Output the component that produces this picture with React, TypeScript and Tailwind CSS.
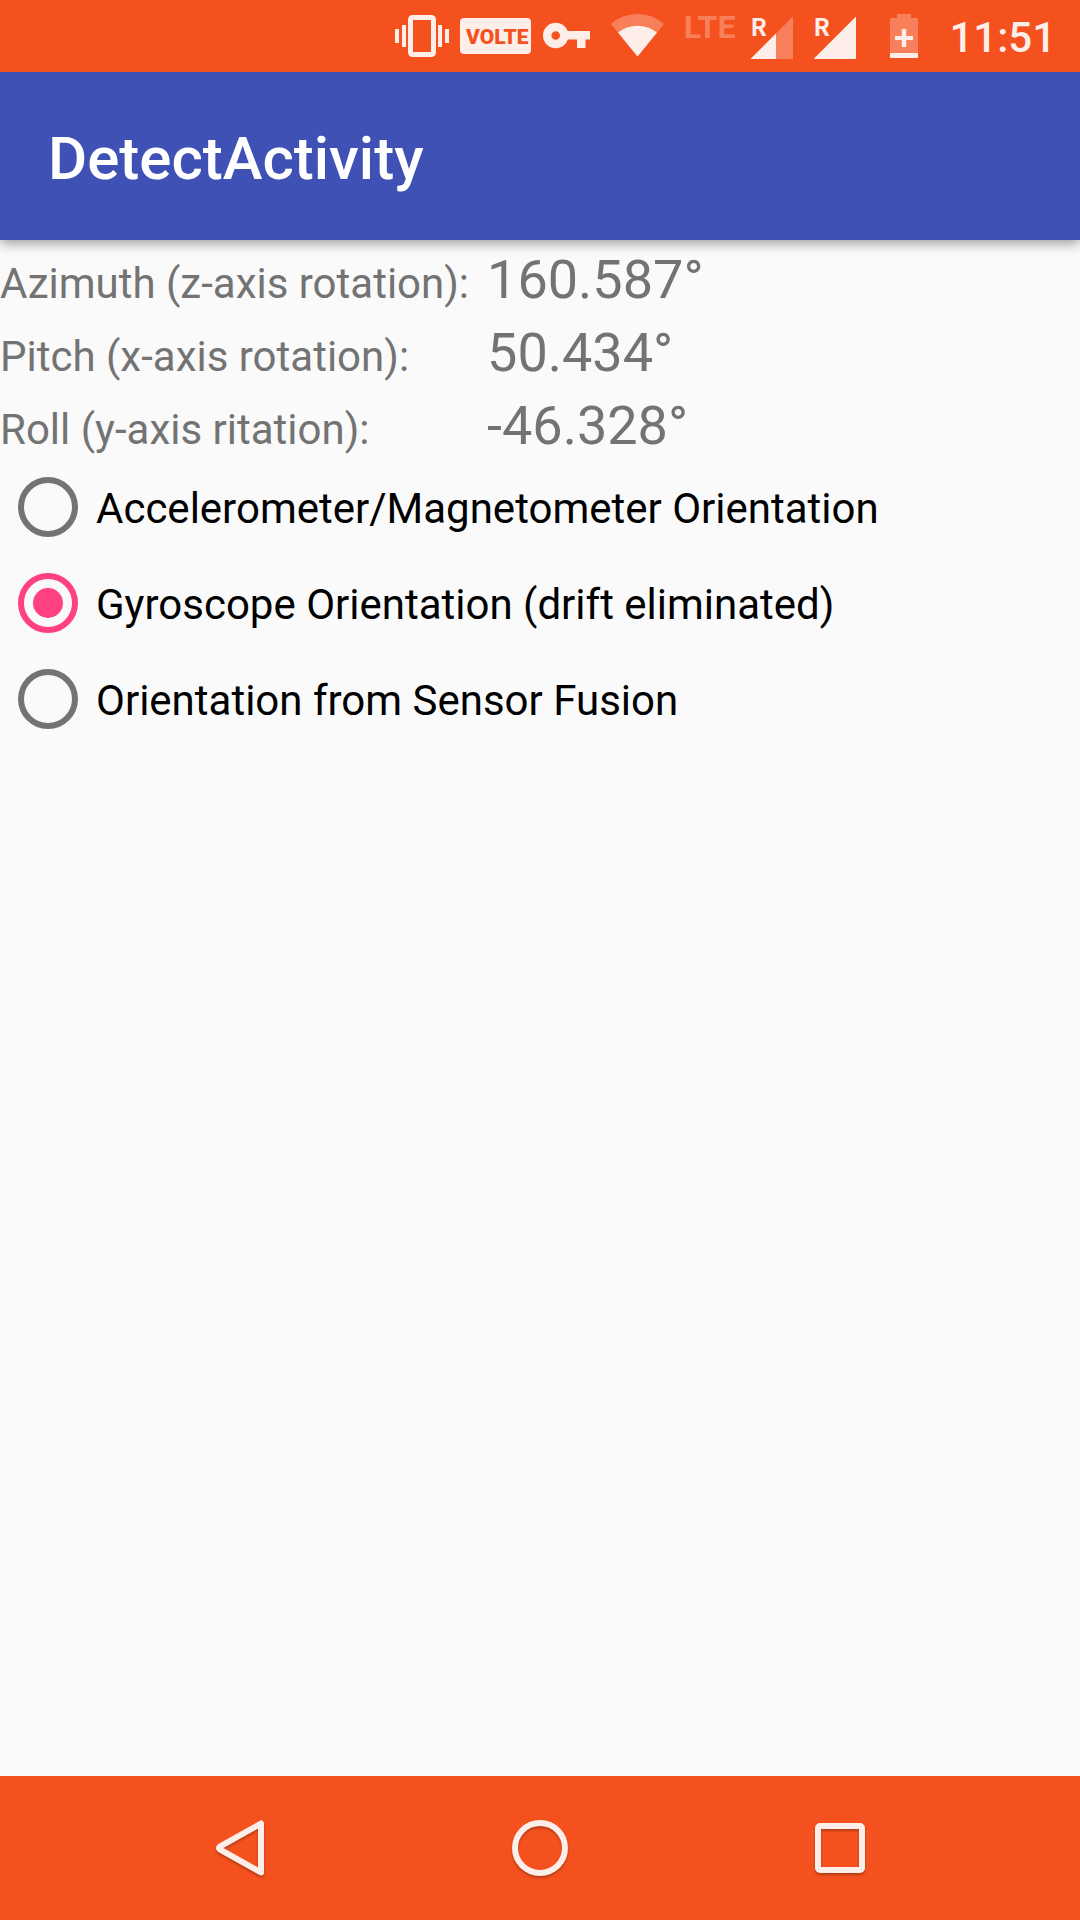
import { useState } from "react";

const readings = [
  { label: "Azimuth (z-axis rotation):", value: "160.587°" },
  { label: "Pitch (x-axis rotation):", value: "50.434°" },
  { label: "Roll (y-axis ritation):", value: "-46.328°" },
];

const modes = [
  "Accelerometer/Magnetometer Orientation",
  "Gyroscope Orientation (drift eliminated)",
  "Orientation from Sensor Fusion",
];

function VibrateIcon() {
  return (
    <svg width="54" height="48" viewBox="0 0 54 48" fill="currentColor" aria-label="Vibrate">
      <rect x="0" y="17" width="4" height="14" />
      <rect x="7" y="13" width="4" height="22" />
      <rect x="15.5" y="5.5" width="23" height="37" rx="2" fill="none" stroke="currentColor" strokeWidth="5" />
      <rect x="43" y="13" width="4" height="22" />
      <rect x="50" y="17" width="4" height="14" />
    </svg>
  );
}

function KeyIcon() {
  return (
    <svg width="47" height="48" viewBox="0 0 47 48" aria-label="VPN">
      <circle cx="12.7" cy="23.5" r="8.5" fill="none" stroke="currentColor" strokeWidth="8.4" />
      <path d="M23 19H47V27.5H42.5V36H34V27.5H23Z" fill="currentColor" />
    </svg>
  );
}

function WifiIcon() {
  return (
    <svg width="53" height="48" viewBox="0 0 53 48" fill="currentColor" aria-label="Wi-Fi">
      <path d="M26.5 44.5L0 12A40 40 0 0 1 53 12Z" opacity="0.3" />
      <path d="M26.5 44.5L7 20.4A32 32 0 0 1 46 20.4Z" />
    </svg>
  );
}

function SignalIcon({ full }: { full?: boolean }) {
  return (
    <div className="relative h-12 w-[43px]">
      <svg width="43" height="48" viewBox="0 0 43 48" fill="currentColor" aria-label="Signal">
        <path d="M0.5 47L43 4.5V47Z" opacity={full ? 1 : 0.3} />
        {!full && <path d="M0.5 47L26 21.5V47Z" />}
      </svg>
      <span className="absolute top-0 left-0 font-['Noto_Sans_CJK_SC',sans-serif] text-[24px] leading-7 font-bold">
        R
      </span>
    </div>
  );
}

function BatteryIcon() {
  return (
    <svg width="28" height="48" viewBox="0 0 28 48" fill="currentColor" aria-label="Battery charging">
      <path d="M7 2H21V6H28V41H0V6H7Z" opacity="0.3" />
      <rect x="0" y="41" width="28" height="5" />
      <path d="M11.8 17H16.2V24H23V28H16.2V35H11.8V28H5V24H11.8Z" />
    </svg>
  );
}

function StatusBar() {
  return (
    <div className="relative z-10 flex h-[72px] items-center justify-end bg-[#f4511e] pr-6 text-[#feeee9]">
      <VibrateIcon />
      <span className="ml-[11px] flex h-9 w-[71px] items-center justify-center rounded bg-[#feeee9] pt-0.5 pl-1 font-['Roboto',sans-serif] text-[21px] leading-8 font-black text-[#f4511e]">
        VOLTE
      </span>
      <span className="ml-3">
        <KeyIcon />
      </span>
      <span className="ml-[21px]">
        <WifiIcon />
      </span>
      <span className="mr-[15px] mb-[18px] ml-5 font-['Roboto',sans-serif] text-[32px] leading-8 font-bold opacity-30">
        LTE
      </span>
      <SignalIcon />
      <span className="ml-5">
        <SignalIcon full />
      </span>
      <span className="ml-[34px]">
        <BatteryIcon />
      </span>
      <time className="ml-[31px] pt-1 text-[42px] leading-[48px] font-medium">11:51</time>
    </div>
  );
}

function NavBar() {
  const button = "flex items-center justify-center";
  const icon = "drop-shadow-[0_2px_1px_rgba(0,0,0,0.25)]";
  return (
    <nav className="grid h-36 grid-cols-3 bg-[#f4511e] px-[8.333%] text-[#feeee9]">
      <button type="button" aria-label="Back" className={button}>
        <svg width="60" height="60" viewBox="0 0 60 60" className={icon} fill="none" stroke="currentColor" strokeWidth="6" strokeLinejoin="round">
          <path d="M51 5.5V54.5L9.8 31.3Q8 30 9.8 28.7Z" />
        </svg>
      </button>
      <button type="button" aria-label="Home" className={button}>
        <svg width="60" height="60" viewBox="0 0 60 60" className={icon} fill="none" stroke="currentColor" strokeWidth="6">
          <circle cx="30" cy="30" r="25" />
        </svg>
      </button>
      <button type="button" aria-label="Recent apps" className={button}>
        <svg width="60" height="60" viewBox="0 0 60 60" className={icon} fill="none" stroke="currentColor" strokeWidth="6">
          <rect x="8" y="8" width="44" height="44" rx="2" />
        </svg>
      </button>
    </nav>
  );
}

export default function App() {
  const [mode, setMode] = useState(modes[1]);

  return (
    <div className="flex min-h-screen flex-col bg-[#fafafa] font-['Roboto',sans-serif]">
      <StatusBar />
      <header className="flex h-[168px] items-center bg-[#3f51b5] px-12 pt-1.5 shadow-[0_3px_12px_rgba(0,0,0,0.4)]">
        <h1 className="text-[60px] leading-[72px] font-medium text-white">DetectActivity</h1>
      </header>
      <main className="flex-1">
        <table className="text-[#737373]">
          <tbody>
            {readings.map(({ label, value }) => (
              <tr key={label} className="h-[73px] align-baseline">
                <th scope="row" className="pr-[18px] text-left text-[42px] leading-[50px] font-normal">
                  {label}
                </th>
                <td className="pt-2 text-[54px] leading-[63px]">{value}</td>
              </tr>
            ))}
          </tbody>
        </table>
        <div role="radiogroup" aria-label="Orientation source">
          {modes.map((name) => (
            <label key={name} className="flex h-24 items-center gap-[18px] pl-[18px] text-[42px] leading-[50px] text-black">
              <input
                type="radio"
                name="mode"
                checked={mode === name}
                onChange={() => setMode(name)}
                className="grid size-[60px] shrink-0 appearance-none place-items-center rounded-full border-6 border-[#737373] before:size-[30px] before:rounded-full checked:border-[#ff4081] checked:before:bg-[#ff4081]"
              />
              <span className="pt-1">{name}</span>
            </label>
          ))}
        </div>
      </main>
      <NavBar />
    </div>
  );
}
